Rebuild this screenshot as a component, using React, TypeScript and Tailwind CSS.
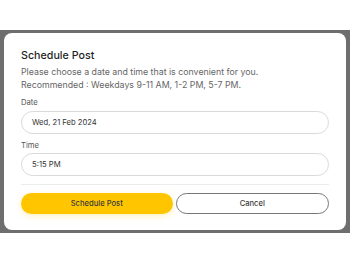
export default function App() {
  const font = { fontFamily: "Inter, 'Noto Sans', sans-serif" };
  return (
    <div className="w-[350px] h-[263px] bg-white overflow-hidden" style={font}>
      <div className="h-[30px] bg-white" />
      <div className="bg-[#6e6e6e] px-[4px] pt-[3px] pb-[3px]">
        <div className="bg-white rounded-[8px] pl-[17px] pr-[17px] pt-[14px] pb-[16px]">
          <div className="text-[10.7px] leading-[18px] font-medium text-[#1f1f1f]">Schedule Post</div>
          <div className="text-[8.8px] leading-[13px] text-[#666]">
            <div>Please choose a date and time that is convenient for you.</div>
            <div>Recommended : Weekdays 9-11 AM, 1-2 PM, 5-7 PM.</div>
          </div>
          <div className="mt-[6px] text-[7.7px] leading-[12px] text-[#555]">Date</div>
          <div className="mt-[2px] h-[23px] rounded-full border border-[#dadada] flex items-center pl-[10px] text-[7.6px] text-[#333]">
            Wed, 21 Feb 2024
          </div>
          <div className="mt-[6px] text-[7.7px] leading-[12px] text-[#555]">Time</div>
          <div className="mt-[1px] h-[23px] rounded-full border border-[#dadada] flex items-center pl-[10px] text-[7.7px] text-[#333]">
            5:15 PM
          </div>
          <div className="mt-[8px] h-px bg-[#ececec]" />
          <div className="mt-[8px] flex gap-[3px]">
            <button className="flex-1 h-[21px] rounded-full bg-[#ffc600] text-[7.6px] font-medium text-[#3a3a3a] shadow-[0_2px_6px_rgba(255,198,0,0.25)]">
              Schedule Post
            </button>
            <button className="flex-1 h-[21px] rounded-full border border-[#777] bg-white text-[7.6px] font-medium text-[#3a3a3a]">
              Cancel
            </button>
          </div>
        </div>
      </div>
    </div>
  );
}
